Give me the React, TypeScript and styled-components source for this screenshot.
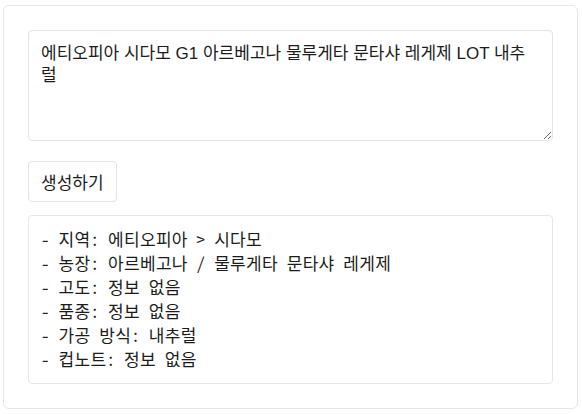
import React from "react";
import styled, { createGlobalStyle } from "styled-components";

const GlobalStyle = createGlobalStyle`
  html, body {
    margin: 0;
    padding: 0;
    background: #ffffff;
  }
  body {
    font-family: "Liberation Sans", "Noto Sans CJK KR", sans-serif;
    color: #1c1c1c;
  }
  * {
    box-sizing: border-box;
  }
`;

const Card = styled.div`
  margin: 5px 4px 4px 3px;
  border: 1px solid #e6e6e6;
  border-radius: 6px;
  padding: 24px;
  display: flex;
  flex-direction: column;
  align-items: stretch;
`;

const Input = styled.textarea`
  display: block;
  width: 100%;
  height: 111px;
  padding: 12px 12px;
  border: 1px solid #e3e3e3;
  border-radius: 4px;
  font-family: "Liberation Sans", "Noto Sans CJK KR", sans-serif;
  font-size: 17px;
  line-height: 22px;
  color: #1c1c1c;
  resize: vertical;
  outline: none;
  background: #ffffff;
`;

const GenerateButton = styled.button`
  align-self: flex-start;
  margin-top: 20px;
  height: 41px;
  padding: 0 12px;
  border: 1px solid #e3e3e3;
  border-radius: 4px;
  background: #ffffff;
  font-family: "Liberation Sans", "Noto Sans CJK KR", sans-serif;
  font-size: 17px;
  color: #1c1c1c;
  cursor: pointer;
`;

const Output = styled.pre`
  margin: 13px 0 0;
  height: 169px;
  padding: 11px 12px;
  border: 1px solid #e6e6e6;
  border-radius: 4px;
  font-family: "Noto Sans Mono CJK KR", "Liberation Mono", "Noto Sans CJK KR", monospace;
  font-size: 17px;
  letter-spacing: 0.3px;
  line-height: 24px;
  color: #1c1c1c;
  white-space: pre-wrap;
`;

const query =
  "에티오피아 시다모 G1 아르베고나 물루게타 문타샤 레게제 LOT 내추럴";

const result = [
  "- 지역: 에티오피아 > 시다모",
  "- 농장: 아르베고나 / 물루게타 문타샤 레게제",
  "- 고도: 정보 없음",
  "- 품종: 정보 없음",
  "- 가공 방식: 내추럴",
  "- 컵노트: 정보 없음",
].join("\n");

export default function App() {
  return (
    <>
      <GlobalStyle />
      <Card>
        <Input defaultValue={query} spellCheck />
        <GenerateButton type="button">생성하기</GenerateButton>
        <Output>{result}</Output>
      </Card>
    </>
  );
}
